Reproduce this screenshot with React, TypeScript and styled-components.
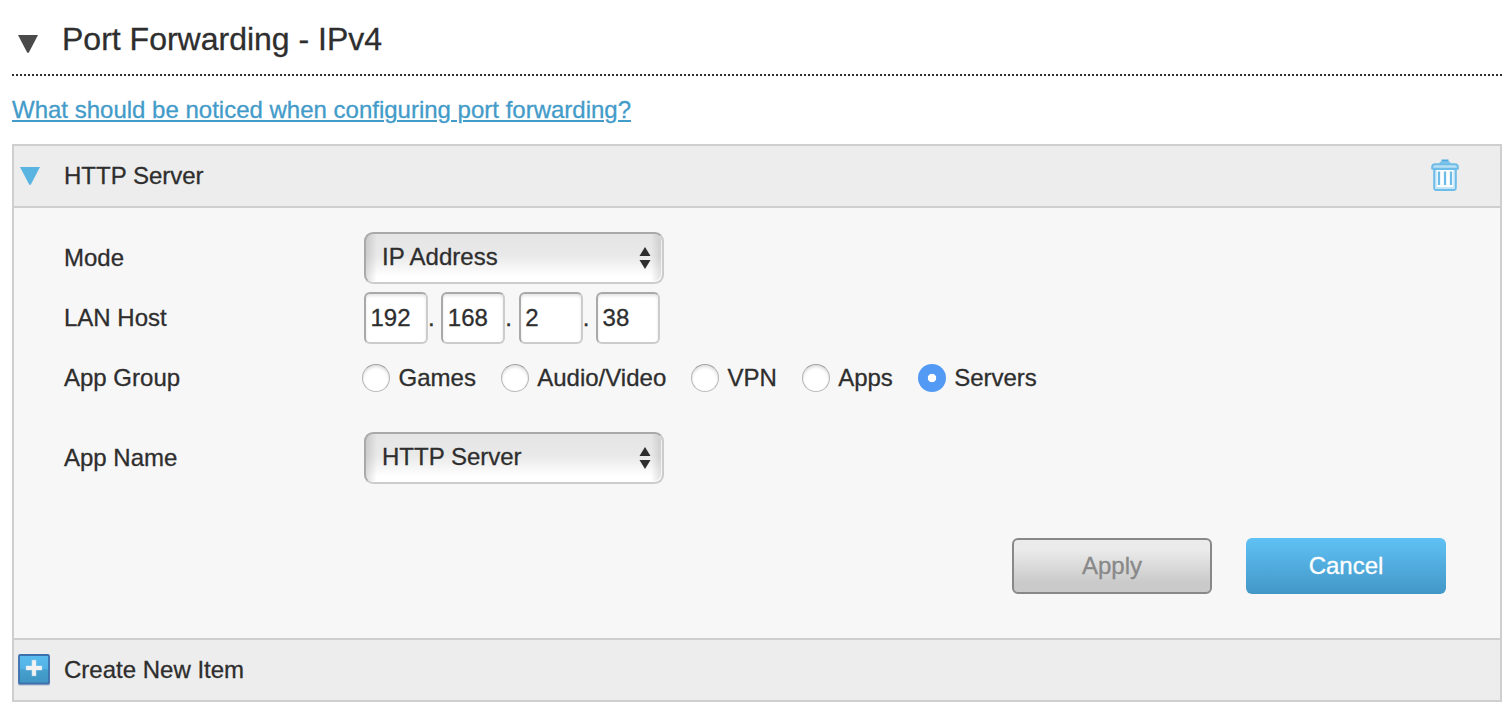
import React, { useState } from "react";
import styled, { createGlobalStyle, css } from "styled-components";

const GlobalStyle = createGlobalStyle`
  *, *::before, *::after { box-sizing: border-box; }
  body {
    margin: 0;
    background: #fff;
    color: #2e2e2e;
    font-family: "Liberation Sans", Arial, sans-serif;
    font-size: 24px;
    line-height: 28px;
    -webkit-text-stroke: 0.3px;
  }
`;

const Page = styled.main`
  height: 716px;
  padding: 0 10px 0 12px;
  overflow: hidden;
`;

const TitleBar = styled.header`
  display: flex;
  align-items: center;
  height: 76px;
  padding: 4px 0 2px 6px;
  background: repeating-linear-gradient(90deg, #2e2e2e 0 2px, transparent 2px 4px) left bottom / 100% 2px no-repeat;
`;

const Title = styled.h1`
  margin: 0 0 0 24px;
  font-size: 32px;
  font-weight: 400;
  line-height: 36px;
`;

const TitleArrow = styled.span`
  display: flex;
  margin-top: 10px;
`;

const HelpLink = styled.a`
  display: block;
  width: max-content;
  margin: 20px 0;
  color: #439bc9;
  text-decoration: underline;
  text-decoration-thickness: 2px;
  text-underline-offset: 2px;
  text-decoration-skip-ink: auto;
`;

const Panel = styled.section`
  border: 2px solid #cfcfcf;
  background: #f7f7f7;
`;

const PanelBar = styled.div<{ $edge: "top" | "bottom" }>`
  display: flex;
  align-items: center;
  height: 62px;
  background: #ededed;
  border-${(p) => p.$edge}: 2px solid #cfcfcf;
`;

const BarIcon = styled.span<{ $inset: number }>`
  display: flex;
  flex: none;
  width: 50px;
  padding-left: ${(p) => p.$inset}px;
`;

const BarLabel = styled.span`
  flex: 1;
`;

const DeleteButton = styled.button`
  display: flex;
  margin: 0 41px 2px 0;
  padding: 0;
  border: 0;
  background: none;
`;

const Form = styled.form`
  display: flex;
  flex-direction: column;
  height: 430px;
  padding: 20px 54px 44px 50px;
`;

const Row = styled.div<{ $gapAfter?: number }>`
  display: flex;
  align-items: center;
  height: 60px;
  margin-bottom: ${(p) => p.$gapAfter ?? 0}px;
`;

const RowLabel = styled.span`
  flex: none;
  width: 300px;
`;

const fieldBorder = css`
  border: 2px solid;
  border-color: #a9a9a9 #cccccc #cccccc #a9a9a9;
`;

const Select = styled.button`
  ${fieldBorder}
  display: flex;
  align-items: center;
  justify-content: space-between;
  width: 300px;
  height: 52px;
  padding: 0 11.5px 2px 16px;
  border-radius: 9px;
  background:
    linear-gradient(90deg, rgba(120, 120, 120, 0.25), rgba(120, 120, 120, 0) 11px),
    linear-gradient(270deg, rgba(120, 120, 120, 0.25), rgba(120, 120, 120, 0) 11px),
    linear-gradient(#e5e5e5, #e9e9e9 45%, #ffffff 88%);
  box-shadow: inset -1px -1px 1px rgba(255, 255, 255, 0.8);
  color: inherit;
  font: inherit;
  -webkit-text-stroke: inherit;
`;

const Stepper = styled.svg`
  display: block;
  margin-top: 1px;
`;

const Octet = styled.input`
  ${fieldBorder}
  width: 64px;
  height: 52px;
  padding: 0 4.5px;
  border-radius: 6px;
  background: #fff;
  box-shadow: inset 0 2px 3px rgba(0, 0, 0, 0.1);
  color: inherit;
  font: inherit;
  -webkit-text-stroke: inherit;
`;

const Dot = styled.span`
  white-space: pre;
`;

const RadioGroup = styled.div`
  display: flex;
  gap: 24.7px;
  margin-left: -2px;
`;

const RadioLabel = styled.label`
  display: flex;
  align-items: center;
  gap: 8.6px;
`;

const Radio = styled.input`
  appearance: none;
  width: 28px;
  height: 28px;
  margin: 0;
  border: 1px solid;
  border-color: #a0a0a0 #b5b5b5 #bebebe;
  border-radius: 50%;
  background: #fff;
  box-shadow: inset 0 2px 3px rgba(0, 0, 0, 0.13);

  &:checked {
    border: 0;
    background: radial-gradient(circle, #fff 3.8px, #539af5 4.6px);
    box-shadow: none;
  }
`;

const Actions = styled.div`
  display: flex;
  justify-content: flex-end;
  gap: 34px;
  margin-top: auto;
`;

const ActionButton = styled.button<{ $primary?: boolean }>`
  width: 200px;
  height: 56px;
  padding: 0 0 1px;
  border-radius: 6px;
  font: inherit;
  -webkit-text-stroke: inherit;
  ${(p) =>
    p.$primary
      ? css`
          border: 0;
          background: linear-gradient(#60c1f4, #4297c7);
          color: #fff;
        `
      : css`
          border: 2px solid #888;
          background: linear-gradient(#ebebeb 18%, #cacaca 82%);
          color: #888;
        `}
`;

function Arrow({ color }: { color: string }) {
  return (
    <svg width="20" height="18" viewBox="0 0 20 18">
      <path d="M0 0H20L11 17.2Q10 18.6 9 17.2Z" fill={color} />
    </svg>
  );
}

function TrashIcon() {
  return (
    <svg width="28" height="32" viewBox="0 0 28 32" fill="none">
      <path d="M9.3 6V5Q9.3 3.2 11 3.2H17Q18.7 3.2 18.7 5V6" fill="#a9d8f2" stroke="#7cc3ea" strokeWidth="1.9" />
      <path d="M10.5 1.5H17.5" stroke="#4fabe0" strokeWidth="2" />
      <path d="M3.2 10H24.8V28.5Q24.8 31 22.5 31H5.5Q3.2 31 3.2 28.5Z" fill="#fff" stroke="#6dbce8" strokeWidth="2" />
      <path d="M4.2 29H23.8" stroke="#c4e5f7" strokeWidth="2" />
      <path d="M1.2 9.7V8Q1.2 5.2 4 5.2H24Q26.8 5.2 26.8 8V9.7Z" fill="#b9e0f5" stroke="#6dbce8" strokeWidth="2" strokeLinejoin="round" />
      <path d="M4.8 11V28M23.2 11V28" stroke="#b3ddf4" strokeWidth="1.4" />
      <path d="M8 12.5V26M14 12.5V26M20 12.5V26" stroke="#6dbce8" strokeWidth="2.3" />
    </svg>
  );
}

function AddIcon() {
  return (
    <svg width="32" height="32" viewBox="0 0 32 32">
      <defs>
        <linearGradient id="addFill" x1="0" y1="0" x2="0" y2="1">
          <stop offset="0" stopColor="#5bbcf0" />
          <stop offset="0.48" stopColor="#52b2e6" />
          <stop offset="0.52" stopColor="#469fce" />
          <stop offset="1" stopColor="#3f95c4" />
        </linearGradient>
      </defs>
      <rect y="2" width="32" height="29.5" rx="1.5" fill="#a9b9cb" />
      <rect x="1" y="1" width="30" height="28.5" rx="1" fill="url(#addFill)" stroke="#3f71ad" strokeWidth="1.8" />
      <path d="M7.7 14H24.3M16 5.8V22.2" stroke="#fff" strokeOpacity="0.35" strokeWidth="5" />
      <path d="M8.2 14H23.8M16 6.2V21.8" stroke="#f2f2f2" strokeWidth="3.8" />
    </svg>
  );
}

function SelectField({ value }: { value: string }) {
  return (
    <Select type="button">
      {value}
      <Stepper width="12" height="22" viewBox="0 0 12 22">
        <path d="M6 0L11.5 9H0.5ZM6 22L11.5 13H0.5Z" fill="#2e2e2e" />
      </Stepper>
    </Select>
  );
}

const groups = ["Games", "Audio/Video", "VPN", "Apps", "Servers"];

export default function App() {
  const [group, setGroup] = useState("Servers");
  const address = ["192", "168", "2", "38"];

  return (
    <Page>
      <GlobalStyle />
      <TitleBar>
        <TitleArrow>
          <Arrow color="#4a4a4a" />
        </TitleArrow>
        <Title>Port Forwarding - IPv4</Title>
      </TitleBar>
      <HelpLink href="#">What should be noticed when configuring port forwarding?</HelpLink>
      <Panel>
        <PanelBar $edge="bottom">
          <BarIcon $inset={6}>
            <Arrow color="#59b4e2" />
          </BarIcon>
          <BarLabel>HTTP Server</BarLabel>
          <DeleteButton type="button" aria-label="Delete">
            <TrashIcon />
          </DeleteButton>
        </PanelBar>
        <Form>
          <Row>
            <RowLabel>Mode</RowLabel>
            <SelectField value="IP Address" />
          </Row>
          <Row>
            <RowLabel>LAN Host</RowLabel>
            {address.map((octet, i) => (
              <React.Fragment key={i}>
                {i > 0 && <Dot>{". "}</Dot>}
                <Octet defaultValue={octet} />
              </React.Fragment>
            ))}
          </Row>
          <Row $gapAfter={20}>
            <RowLabel>App Group</RowLabel>
            <RadioGroup>
              {groups.map((name) => (
                <RadioLabel key={name}>
                  <Radio type="radio" name="group" checked={group === name} onChange={() => setGroup(name)} />
                  {name}
                </RadioLabel>
              ))}
            </RadioGroup>
          </Row>
          <Row>
            <RowLabel>App Name</RowLabel>
            <SelectField value="HTTP Server" />
          </Row>
          <Actions>
            <ActionButton type="button">Apply</ActionButton>
            <ActionButton type="button" $primary>
              Cancel
            </ActionButton>
          </Actions>
        </Form>
        <PanelBar $edge="top">
          <BarIcon $inset={4}>
            <AddIcon />
          </BarIcon>
          <BarLabel>Create New Item</BarLabel>
        </PanelBar>
      </Panel>
    </Page>
  );
}
